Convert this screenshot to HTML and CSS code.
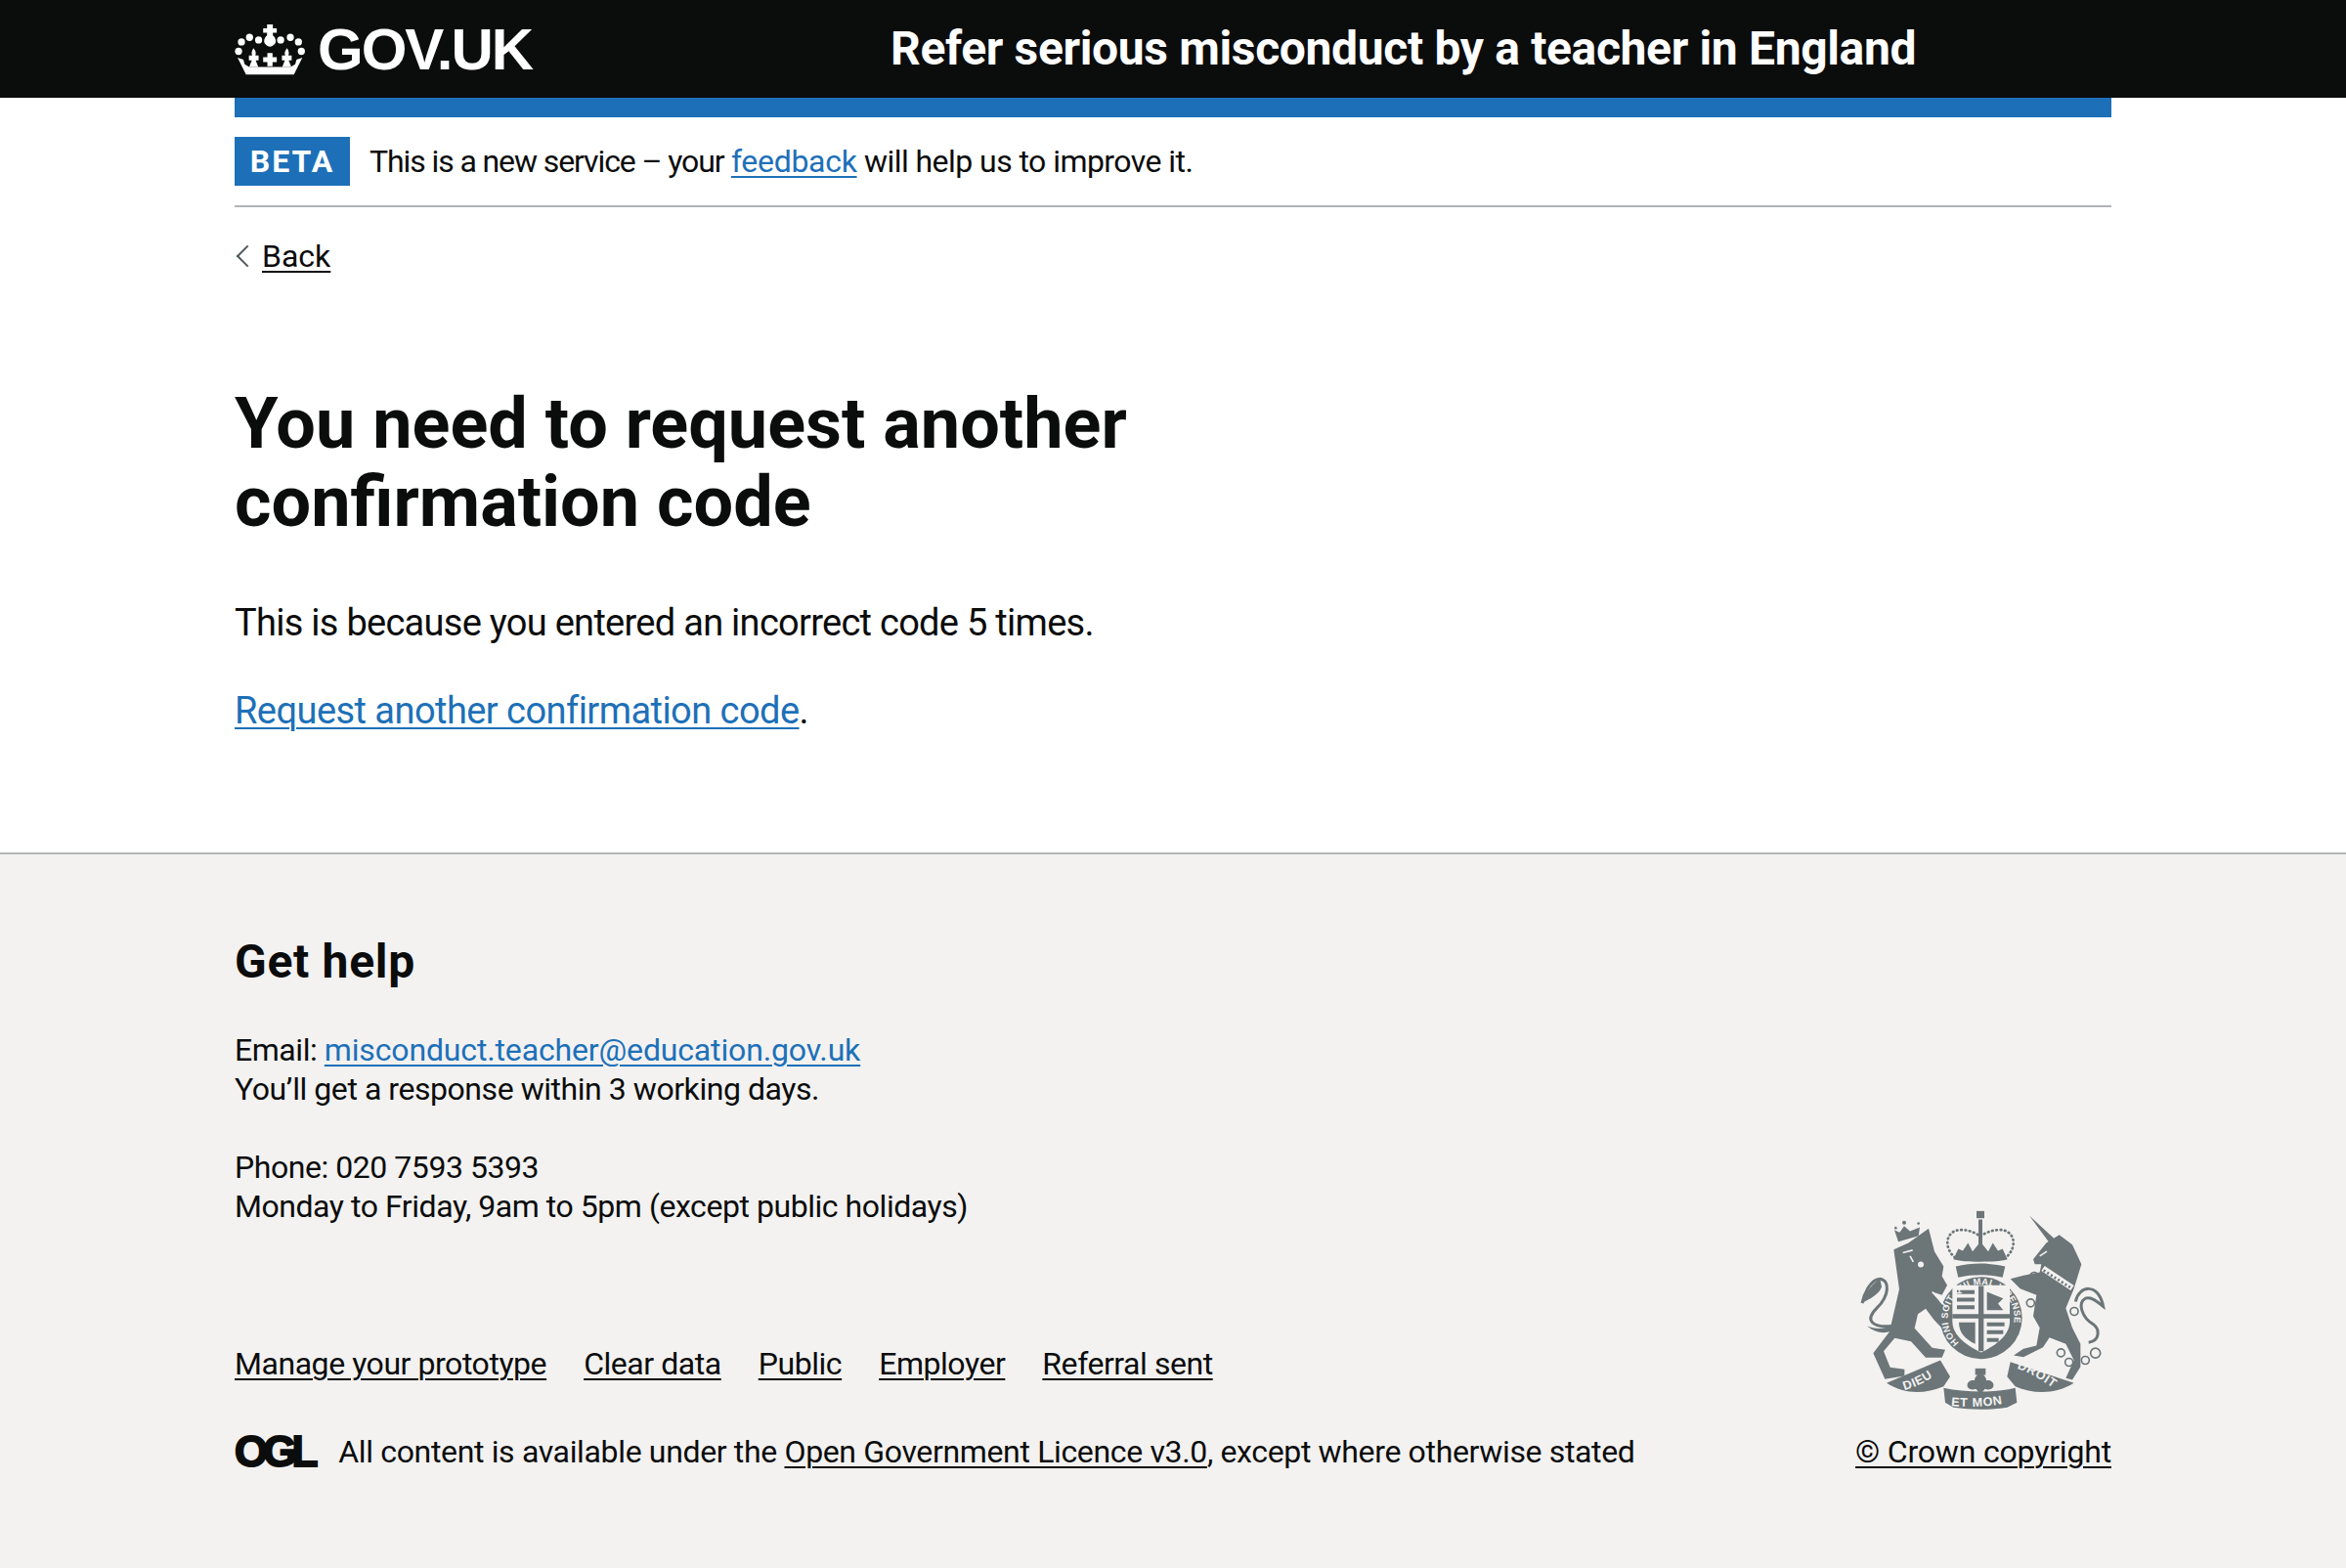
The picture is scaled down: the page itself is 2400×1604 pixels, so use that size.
FILE: index.html
```html
<!DOCTYPE html>
<html lang="en">

<head>
    <title>You need to request another confirmation code - Refer serious misconduct by a teacher in England</title>
    <link rel="stylesheet" href="styles.css">
</head>

<body>
    <header class="site-header">
        <div class="container header-row">
            <a class="logo" href="#">
                <svg class="crown" viewBox="120 62 218 160" aria-hidden="true">
                    <g fill="#fff">
                        <circle cx="131" cy="148" r="11"/>
                        <circle cx="140" cy="119" r="11"/>
                        <circle cx="165" cy="105" r="11"/>
                        <circle cx="193" cy="113" r="11"/>
                        <circle cx="261" cy="113" r="11"/>
                        <circle cx="291" cy="105" r="11"/>
                        <circle cx="316" cy="119" r="11"/>
                        <circle cx="325" cy="148" r="11"/>
                        <path d="M219 65h18v12h12v14h-12v8c6 5 9 11 9 17 0 8-7 15-18 18-11-3-18-10-18-18 0-6 3-12 9-17v-8h-12V77h12z"/>
                        <path d="M220 153h16v13h13v15h-13v13h-16v-13h-13v-15h13z"/>
                        <path d="M177 138c7 8 9 14 6 23h10v15h-9l8 20h-28l8-20h-9v-15h10c-3-9-1-15 4-23z"/>
                        <path d="M281 138c-7 8-9 14-6 23h-10v15h9l-8 20h28l-8-20h9v-15h-10c3-9 1-15-4-23z"/>
                        <path d="M128 168l18 6 4 14 14 8h128l14-8 4-14 18-6-26 52H154z"/>
                    </g>
                </svg>
                <span class="logo-text">GOV.UK</span>
            </a>
            <a class="service-name" href="#">Refer serious misconduct by a teacher in England</a>
        </div>
    </header>

    <div class="page">
        <div class="blue-bar"></div>
        <div class="phase-banner">
            <strong class="tag">BETA</strong>
            <span><span class="phase-lead">This is a new service – your</span> <a href="#">feedback</a> will help us to improve it.</span>
        </div>
        <a class="back-link" href="#">Back</a>

        <main class="main">
            <h1>You need to request another confirmation code</h1>
            <p>This is because you entered an incorrect code 5 times.</p>
            <p><a href="#">Request another confirmation code</a>.</p>
        </main>
    </div>

    <footer class="footer">
        <div class="container">
            <h2>Get help</h2>
            <p class="help-text">Email: <a href="#">misconduct.teacher@education.gov.uk</a><br>You’ll get a response within 3 working days.</p>
            <p class="help-text">Phone: 020 7593 5393<br>Monday to Friday, 9am to 5pm (except public holidays)</p>

            <div class="meta">
                <div class="meta-left">
                    <ul class="meta-links">
                        <li><a href="#">Manage your prototype</a></li>
                        <li><a href="#">Clear data</a></li>
                        <li><a href="#">Public</a></li>
                        <li><a href="#">Employer</a></li>
                        <li><a href="#">Referral sent</a></li>
                    </ul>
                    <div class="licence">
                        <span class="ogl">OGL</span>
                        <span>All content is available under the <a href="#">Open Government Licence v3.0</a>, except where otherwise stated</span>
                    </div>
                </div>
                <div class="meta-right">
                    <svg class="crest" viewBox="60 60 780 620" aria-hidden="true">
                        <defs>
                            <path id="garter" d="M372 466A102 102 0 1 1 510 464"/>
                            <path id="ribbon-left" d="M205 612Q265 596 322 548"/>
                            <path id="ribbon-mid" d="M348 660Q440 668 528 650"/>
                            <path id="ribbon-right" d="M550 545Q610 566 672 614"/>
                        </defs>
                        <g fill="#6c7578">
                            <!-- lion -->
                            <path d="M172 180l45-20 62-44 18 70 28 46-5 30 16 28-16 30-30-10 40 52 16 40-26 20-24-26-26-34-24 16-10 44 54 60 40 6-10 24h-50l-45-50-50-10-34 40 20 50 44 6v20l-60 10-36-80 50-66 30-130z"/>
                            <path d="M165 415c-55 5-85-15-45-55 40-40 40-85 10-90-30 0-50 50-55 75" fill="none" stroke="#6c7578" stroke-width="9"/>
                            <path d="M130 270c-20 10-45 40-55 75 25-15 50-25 60-50z"/>
                            <path d="M165 415c-30 10-50 10-75 0 25 20 50 25 75 15z"/>
                            <!-- lion crown -->
                            <path d="M186 156l-12-36 16 8 14-20 18 16 30-12-4 26z"/>
                            <circle cx="204" cy="98" r="6"/>
                            <circle cx="178" cy="114" r="4"/>
                            <circle cx="248" cy="100" r="4"/>
                            <!-- unicorn -->
                            <path d="M588 76l78 72-16 12z"/>
                            <path d="M600 210l40-50 40-25 40 30 28 60-23 75-25 60 20 60 25 50v70l-25 40-20-5 25-55-25-50-50-20-20 30-60 30-30-5 30-20 40-10 10-55-20-35 10-65-50-20-30-30 40-10 50-10 5-25-20 0z"/>
                            <path d="M730 340c10-50 70-60 85 15-20-15-35-30-55-25-25 15-10 60 25 80 20 15 20 50-15 55" fill="none" stroke="#6c7578" stroke-width="9"/>
                            <!-- royal crown -->
                            <path d="M426 62h24v22h-24z"/>
                            <path d="M432 88h12v80h-12z"/>
                            <path d="M355 210l15-32 14 6 16-24 14 26 24-30 24 30 14-26 16 24 14-6 15 32c-30 10-136 10-166 0z"/>
                            <path d="M362 232c50-12 102-12 152 0l-8 34c-40-10-96-10-136 0z"/>
                            <!-- garter and shield -->
                            <ellipse cx="440" cy="390" rx="126" ry="126"/>
                            <path d="M352 290h176v110c0 45-45 75-88 96-43-21-88-51-88-96z" fill="#f3f2f1"/>
                            <path d="M432 292h16v200h-16zM352 378h176v14H352z"/>
                            <path d="M366 305h54v12h-54zM366 328h54v12h-54zM366 351h54v12h-54zM458 310l50 20-16 16 16 20h-50zM458 404h54v12h-54zM458 428h50v12h-50zM458 452h36v12h-36zM372 404h50v66c-30-14-50-34-50-66z"/>
                            <!-- ribbon -->
                            <path d="M150 590l165-70 30 50-20 30c-60 25-120 25-175-10z"/>
                            <path d="M325 605c70 15 160 15 220 0l5 45-30 15c-50 8-110 8-165 0l-25-15z"/>
                            <path d="M530 525l195 65c-55 35-125 35-180 10l-25-30z"/>
                            <path d="M422 545h32v20h-32z"/>
                            <path d="M438 556c12 12 18 16 18 26 14-2 24 6 22 18-4 10-16 12-26 8l-14 16-14-16c-10 4-22 2-26-8-2-12 8-20 22-18 0-10 6-14 18-26z"/>
                        </g>
                        <g fill="none" stroke="#6c7578" stroke-width="8" stroke-dasharray="2 11" stroke-linecap="round">
                            <path d="M360 205C320 170 335 118 380 120c25 0 45 10 58 20 13-10 33-20 58-20 45-2 60 50 20 85"/>
                        </g>
                        <!-- cut lines -->
                        <g fill="none" stroke="#f3f2f1" stroke-width="5">
                            <path d="M290 310l44 48"/>
                            <path d="M200 190l30-8M222 200l10 18"/>
                            <path d="M630 238l90 60" stroke-width="18"/>
                            <path d="M620 200l22-14"/>
                        </g>
                        <path d="M632 244l84 54" fill="none" stroke="#6c7578" stroke-width="8" stroke-dasharray="6 7"/>
                        <circle cx="255" cy="226" r="9" fill="#f3f2f1"/>
                        <g fill="none" stroke="#6c7578" stroke-width="5">
                            <circle cx="603" cy="262" r="12"/>
                            <circle cx="592" cy="344" r="12"/>
                            <circle cx="726" cy="370" r="12"/>
                            <circle cx="685" cy="497" r="12"/>
                            <circle cx="710" cy="526" r="12"/>
                            <circle cx="760" cy="520" r="12"/>
                            <circle cx="791" cy="498" r="15"/>
                        </g>
                        <g class="crest-text">
                            <text class="garter-text"><textPath href="#garter">HONI SOIT QUI MAL Y PENSE</textPath></text>
                            <text><textPath href="#ribbon-left">DIEU</textPath></text>
                            <text><textPath href="#ribbon-mid">ET MON</textPath></text>
                            <text><textPath href="#ribbon-right">DROIT</textPath></text>
                        </g>
                    </svg>
                    <a href="#">© Crown copyright</a>
                </div>
            </div>
        </div>
    </footer>
</body>

</html>
```

FILE: styles.css
```css
/* Base */
body {
    margin: 0;
    font-family: Roboto, sans-serif;
    color: #0b0c0c;
    background: #f3f2f1;
}

a {
    color: #1d70b8;
    text-decoration-thickness: 2px;
    text-underline-offset: 4px;
}

.container {
    width: 1920px;
    margin: 0 auto;
}

/* Header */
.site-header {
    background: #0b0c0c;
    height: 100px;
}

.header-row {
    display: flex;
    align-items: center;
    height: 100px;
}

.logo {
    display: flex;
    align-items: center;
    width: 671px;
    color: #fff;
    text-decoration: none;
}

.crown {
    width: 73px;
    height: 53px;
    margin-right: 12px;
}

.logo-text {
    font-family: "Liberation Sans", sans-serif;
    font-weight: 700;
    font-size: 60px;
    letter-spacing: -2px;
}

.service-name {
    color: #fff;
    font-size: 48px;
    line-height: 60px;
    font-weight: 700;
    text-decoration: none;
    letter-spacing: -0.35px;
}

/* Top of page */
.page {
    background: #fff;
    padding: 0 240px;
}

.blue-bar {
    height: 20px;
    background: #1d70b8;
}

.phase-banner {
    display: flex;
    align-items: center;
    height: 90px;
    border-bottom: 2px solid #b1b4b6;
    font-size: 32px;
    letter-spacing: -0.55px;
}

.phase-lead {
    letter-spacing: -1.1px;
}

.phase-banner a {
    letter-spacing: -0.3px;
}

.tag {
    background: #1d70b8;
    color: #fff;
    width: 118px;
    height: 50px;
    line-height: 50px;
    text-align: center;
    margin-right: 20px;
    font-size: 32px;
    letter-spacing: 2px;
}

.back-link {
    display: inline-block;
    position: relative;
    margin-top: 30px;
    padding-left: 28px;
    color: #0b0c0c;
    font-size: 32px;
    line-height: 40px;
}

.back-link::before {
    content: "";
    position: absolute;
    left: 5px;
    top: 12px;
    width: 14px;
    height: 14px;
    border-left: 2px solid #505a5f;
    border-bottom: 2px solid #505a5f;
    transform: rotate(45deg);
}

/* Main */
.main {
    padding: 112px 0 80px;
}

h1 {
    width: 1200px;
    margin: 0 0 58px;
    font-size: 72px;
    line-height: 80px;
    font-weight: 700;
}

.main p {
    margin: 0 0 40px;
    font-size: 38px;
    line-height: 50px;
    letter-spacing: -0.72px;
}

.main p a {
    letter-spacing: -0.55px;
}

/* Footer */
.footer {
    border-top: 2px solid #b1b4b6;
    padding-top: 80px;
    height: 650px;
}

h2 {
    margin: 0 0 40px;
    font-size: 48px;
    line-height: 60px;
    font-weight: 700;
    letter-spacing: 0.7px;
}

.help-text {
    margin: 0 0 40px;
    font-size: 32px;
    line-height: 40px;
    letter-spacing: -0.45px;
}

.help-text a {
    letter-spacing: -0.15px;
}

.meta {
    display: flex;
    justify-content: space-between;
    align-items: flex-end;
    margin-top: -56px;
    font-size: 32px;
    line-height: 40px;
    letter-spacing: -0.45px;
}

.meta a {
    color: #0b0c0c;
}

.meta-links {
    display: flex;
    gap: 38px;
    list-style: none;
    margin: 0 0 50px;
    padding: 0;
}

.licence {
    display: flex;
    align-items: center;
    gap: 26px;
    letter-spacing: -0.35px;
}

.ogl {
    font-family: "Liberation Sans", sans-serif;
    font-weight: 700;
    font-size: 44px;
    line-height: 40px;
    letter-spacing: -5px;
    -webkit-text-stroke: 2px #0b0c0c;
}

.meta-right {
    display: flex;
    flex-direction: column;
    align-items: flex-end;
    letter-spacing: -0.18px;
}

.crest {
    width: 260px;
    height: 207px;
    margin-bottom: 20px;
}

.crest-text {
    fill: #f3f2f1;
    font-family: "Liberation Sans", sans-serif;
    font-weight: 700;
    font-size: 38px;
    letter-spacing: 2px;
}

.crest-text .garter-text {
    font-size: 28px;
    letter-spacing: 1px;
}
```
